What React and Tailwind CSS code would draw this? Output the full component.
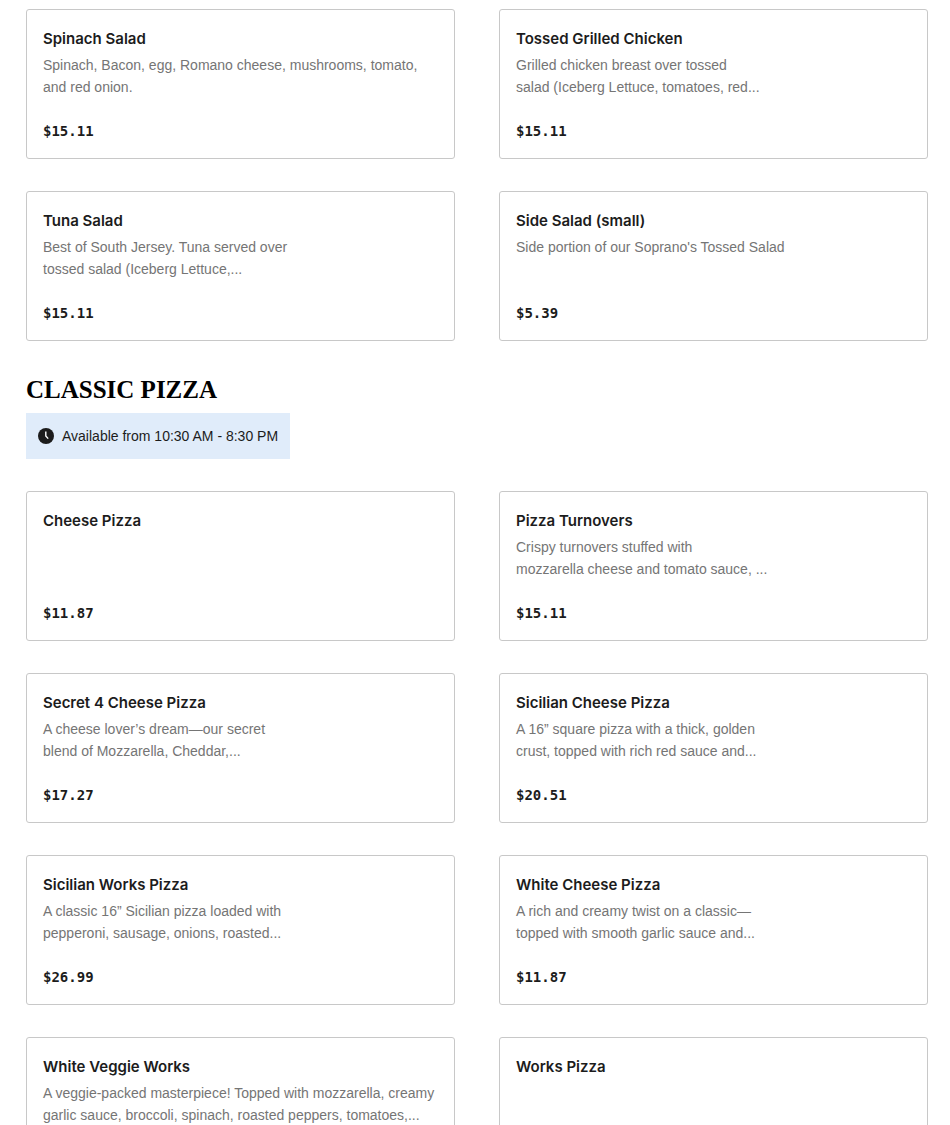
import clsx from 'clsx';

const salads = [
  { name: 'Spinach Salad', lines: ['Spinach, Bacon, egg, Romano cheese, mushrooms, tomato,', 'and red onion.'], price: '$15.11' },
  { name: 'Tossed Grilled Chicken', lines: ['Grilled chicken breast over tossed', 'salad (Iceberg Lettuce, tomatoes, red...'], price: '$15.11' },
  { name: 'Tuna Salad', lines: ['Best of South Jersey. Tuna served over', 'tossed salad (Iceberg Lettuce,...'], price: '$15.11' },
  { name: 'Side Salad (small)', lines: ["Side portion of our Soprano's Tossed Salad"], price: '$5.39' },
];

const pizzas = [
  { name: 'Cheese Pizza', lines: [], price: '$11.87' },
  { name: 'Pizza Turnovers', lines: ['Crispy turnovers stuffed with', 'mozzarella cheese and tomato sauce, ...'], price: '$15.11' },
  { name: 'Secret 4 Cheese Pizza', lines: ['A cheese lover’s dream—our secret', 'blend of Mozzarella, Cheddar,...'], price: '$17.27' },
  { name: 'Sicilian Cheese Pizza', lines: ['A 16” square pizza with a thick, golden', 'crust, topped with rich red sauce and...'], price: '$20.51' },
  { name: 'Sicilian Works Pizza', lines: ['A classic 16” Sicilian pizza loaded with', 'pepperoni, sausage, onions, roasted...'], price: '$26.99' },
  { name: 'White Cheese Pizza', lines: ['A rich and creamy twist on a classic—', 'topped with smooth garlic sauce and...'], price: '$11.87' },
  { name: 'White Veggie Works', lines: ['A veggie-packed masterpiece! Topped with mozzarella, creamy', 'garlic sauce, broccoli, spinach, roasted peppers, tomatoes,...'] },
  { name: 'Works Pizza', lines: [] },
];

const MenuCard = ({ item }) => (
  <article className="flex min-h-[150px] flex-col rounded-[3px] border border-[#c8c8c8] bg-white p-4">
    <h3 className="text-[15px] leading-[26px] font-semibold text-[#1c1c1c]">{item.name}</h3>
    <p className="mt-0.5 font-['Liberation_Sans',sans-serif] text-[14px] leading-[22px] text-[#757575]">
      {item.lines.map((line) => (
        <span key={line} className="block">{line}</span>
      ))}
    </p>
    {item.price && (
      <p className="mt-auto font-['DejaVu_Sans_Mono',monospace] text-[14px] leading-[22px] font-bold text-[#1c1c1c]">{item.price}</p>
    )}
  </article>
);

const MenuGrid = ({ items, className }) => (
  <div className={clsx('grid grid-cols-2 gap-x-11 gap-y-8', className)}>
    {items.map((item) => (
      <MenuCard key={item.name} item={item} />
    ))}
  </div>
);

const App = () => {
  return (
    <main className="min-h-screen bg-white pt-[9px] pr-[22px] pl-[26px] font-['Inter',sans-serif]">
      <MenuGrid items={salads} />

      <section className="mt-8">
        <h2 className="font-['Liberation_Serif',serif] text-[25px] leading-[34px] font-bold text-black">CLASSIC PIZZA</h2>
        <div className="mt-1.5 flex h-[46px] w-fit items-center gap-2 bg-[#e0ecfa] px-3 font-['Liberation_Sans',sans-serif] text-[14px] text-[#1c1c1c]">
          <svg className="size-4" viewBox="0 0 16 16" aria-hidden="true">
            <circle cx="8" cy="8" r="8" fill="#1c1c1c" />
            <path d="M7.8 3.5V8l2.4 2.6" fill="none" stroke="white" strokeWidth="1.4" />
          </svg>
          <span>Available from 10:30 AM - 8:30 PM</span>
        </div>
        <MenuGrid items={pizzas} className="mt-8" />
      </section>
    </main>
  );
};

export default App;
